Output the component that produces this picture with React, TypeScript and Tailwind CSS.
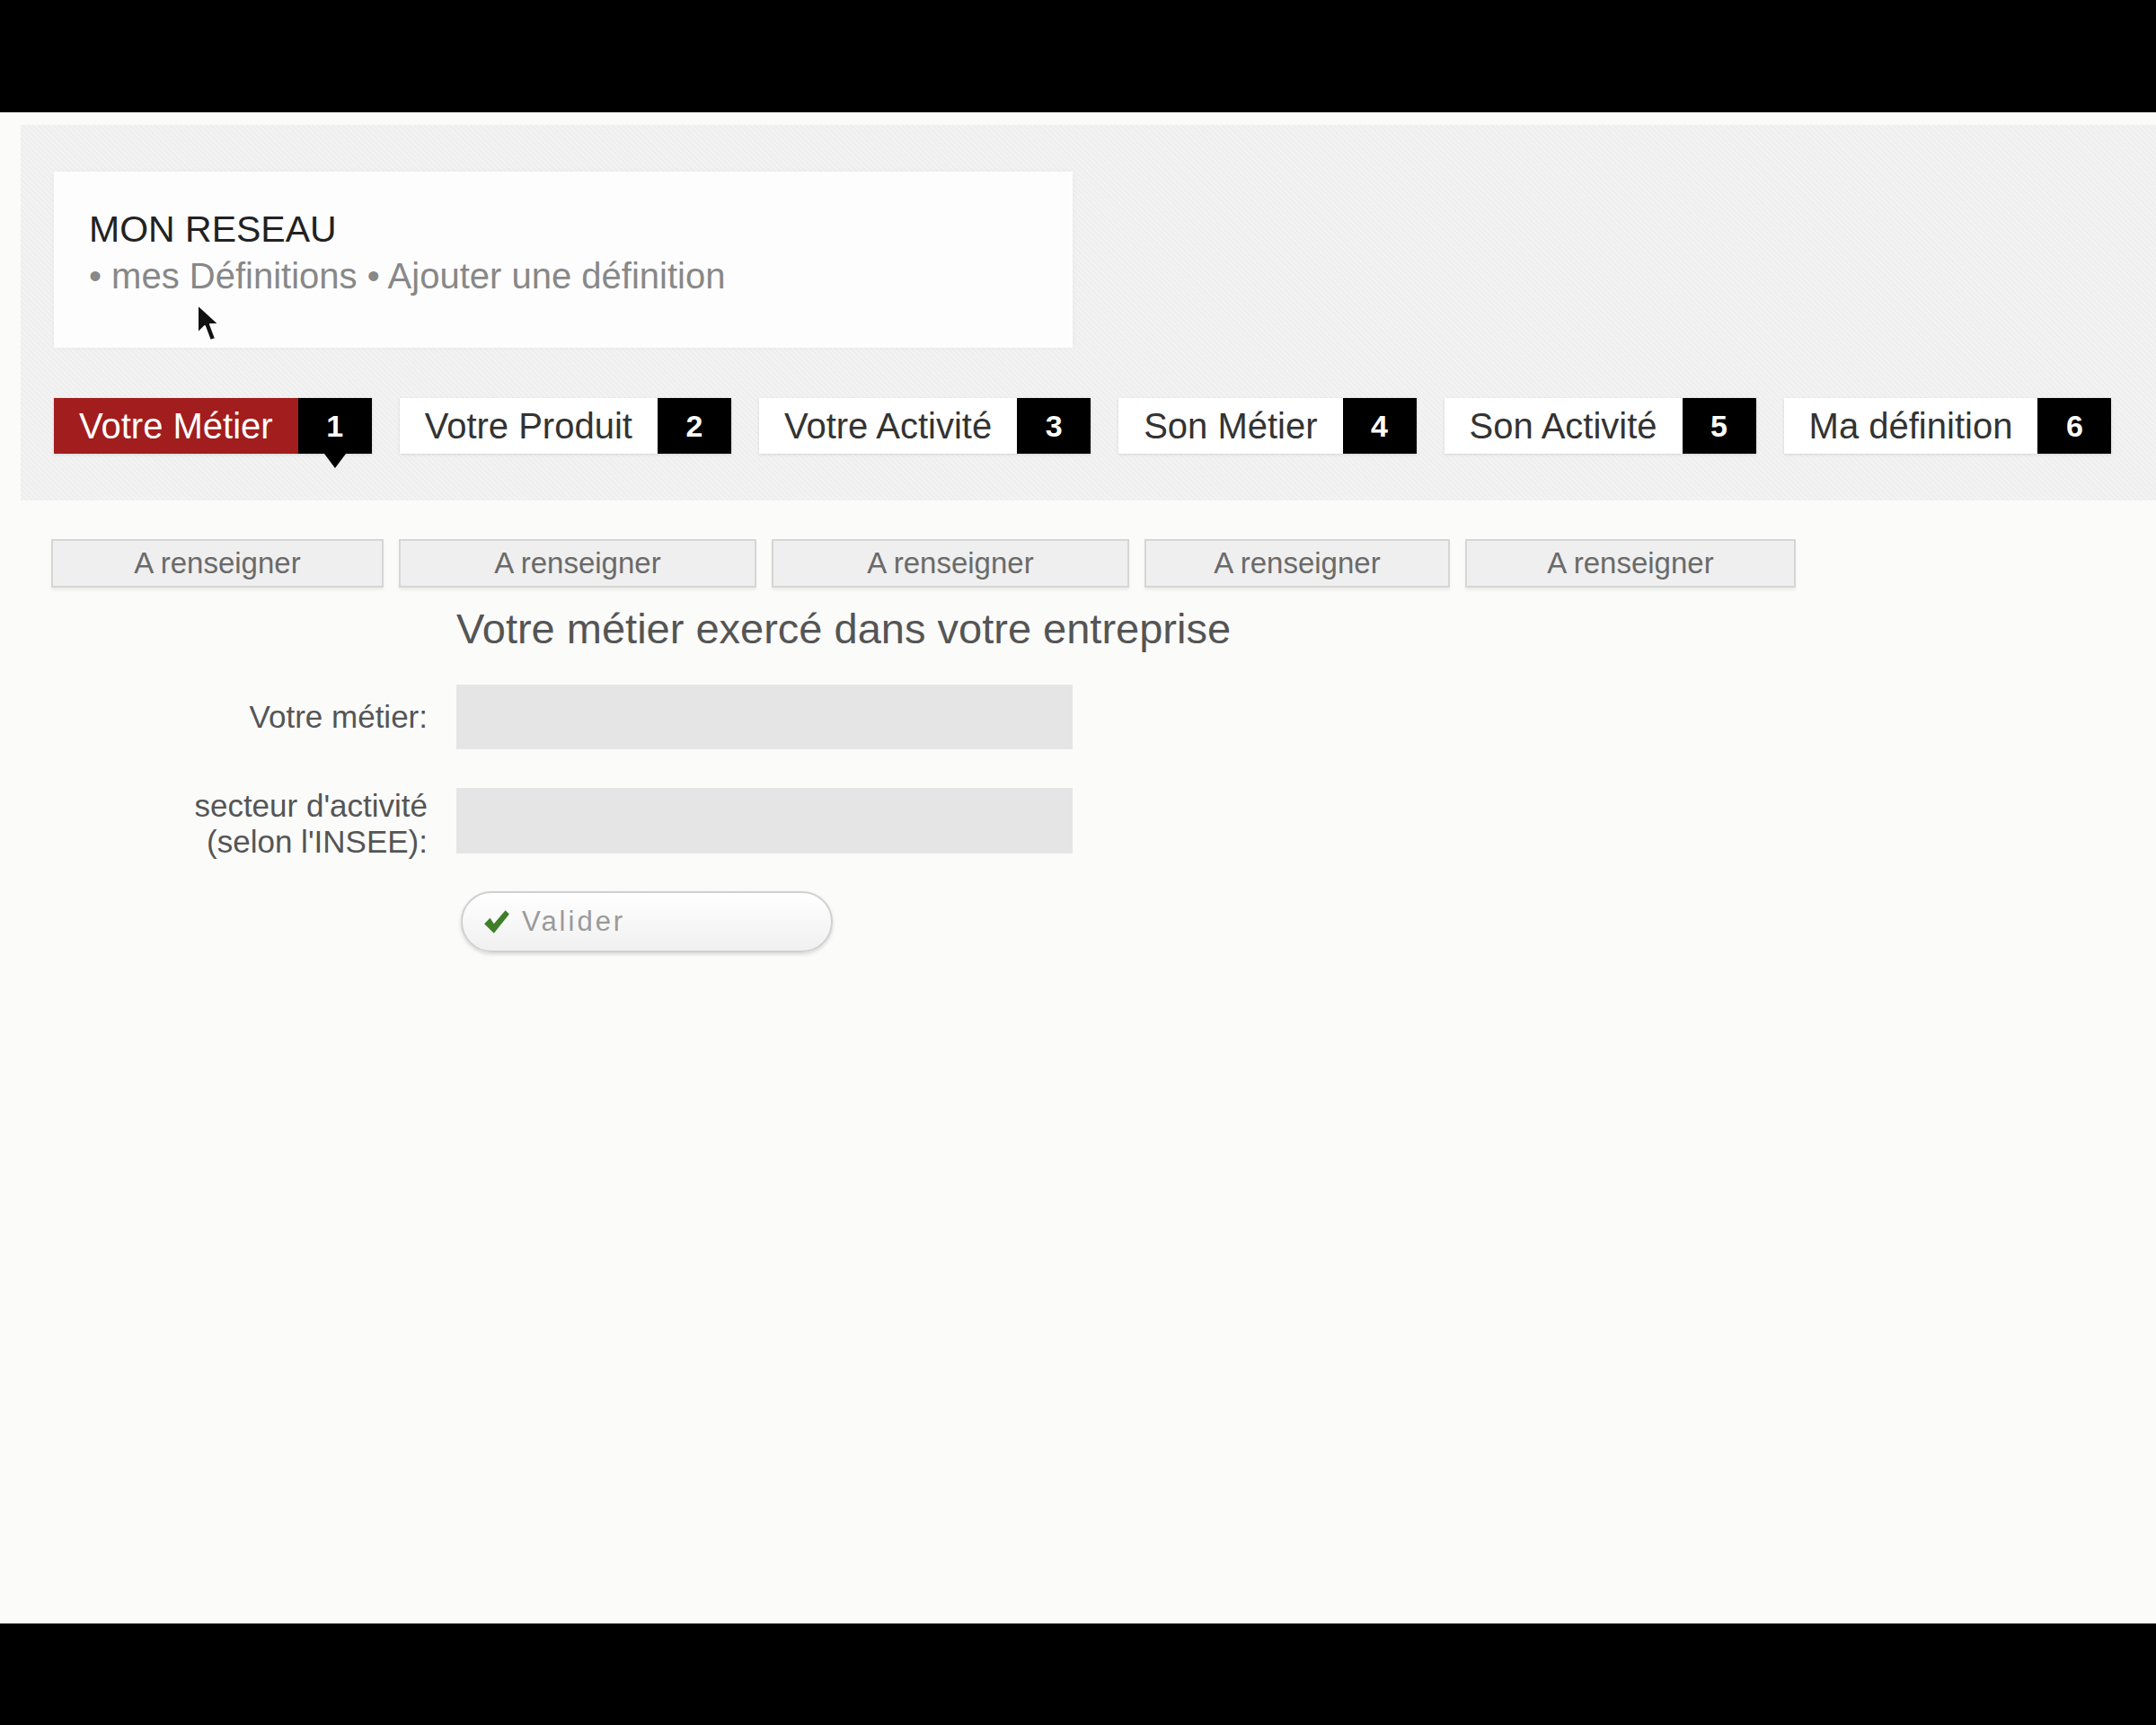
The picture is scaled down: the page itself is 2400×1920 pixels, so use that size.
import { ReactNode } from "react";

const steps = [
  { label: "Votre Métier", n: 1 },
  { label: "Votre Produit", n: 2 },
  { label: "Votre Activité", n: 3 },
  { label: "Son Métier", n: 4 },
  { label: "Son Activité", n: 5 },
  { label: "Ma définition", n: 6 },
];

const statusCells = ["w-[370px]", "w-[398px]", "w-[398px]", "w-[340px]", "w-[368px]"];

function Tab({ label, n, active }: { label: string; n: number; active?: boolean }) {
  return (
    <div className="relative flex h-[62px] shadow-[0_1px_3px_rgba(0,0,0,0.12)]">
      <span
        className={
          active
            ? "flex items-center px-[28px] bg-[#a21d1d] text-white text-[40px]"
            : "flex items-center px-[28px] bg-white text-[#333] text-[40px]"
        }
      >
        {label}
      </span>
      <span className="flex w-[82px] items-center justify-center bg-black text-[34px] font-bold text-white">
        {n}
      </span>
      {active && (
        <span className="absolute -bottom-[16px] right-[29px] h-0 w-0 border-x-[12px] border-t-[16px] border-x-transparent border-t-black" />
      )}
    </div>
  );
}

function FieldRow({ label, children }: { label: ReactNode; children: ReactNode }) {
  return (
    <>
      <div className="flex items-center justify-end text-right text-[35px] leading-[40px] text-[#555]">
        {label}
      </div>
      {children}
    </>
  );
}

function Cursor() {
  return (
    <svg
      className="absolute left-[158px] top-[146px]"
      width="28"
      height="46"
      viewBox="0 0 14 23"
    >
      <path
        d="M1 1 L1 17 L5 13 L8 21 L11 20 L8 12 L13 12 Z"
        fill="#111"
        stroke="#fff"
        strokeWidth="1"
        strokeLinejoin="round"
      />
    </svg>
  );
}

export default function App() {
  return (
    <div className="flex min-h-screen flex-col bg-black font-['Liberation_Sans',Arial,sans-serif]">
      <div className="h-[125px] shrink-0 bg-black" />

      <main className="flex h-[1682px] shrink-0 flex-col bg-[#fbfbfa] pt-[14px]">
        {/* header band with title and step bar */}
        <section className="ml-[23px] h-[418px] bg-[repeating-linear-gradient(45deg,#eeeeee_0px,#eeeeee_2px,#f3f3f3_2px,#f3f3f3_4px)] pl-[37px] pt-[52px]">
          <div className="relative h-[196px] w-[1134px] bg-[#fdfdfd] pl-[39px] pt-[40px] shadow-[0_0_6px_rgba(0,0,0,0.04)]">
            <h1 className="text-[41px] leading-[48px] text-[#222]">MON RESEAU</h1>
            <p className="mt-[4px] text-[40px] leading-[48px] text-[#888]">
              • mes Définitions • Ajouter une définition
            </p>
            <Cursor />
          </div>

          <nav className="mt-[56px] flex gap-[31px]">
            {steps.map((s, i) => (
              <Tab key={s.n} label={s.label} n={s.n} active={i === 0} />
            ))}
          </nav>
        </section>

        {/* status of each step */}
        <div className="ml-[57px] mt-[43px] flex gap-[17px]">
          {statusCells.map((w, i) => (
            <div
              key={i}
              className={`${w} flex h-[54px] items-center justify-center border-2 border-[#d6d6d6] bg-[#efefef] text-[33px] text-[#6a6a6a] shadow-[0_3px_3px_rgba(0,0,0,0.06)]`}
            >
              A renseigner
            </div>
          ))}
        </div>

        {/* step form */}
        <form className="mt-[20px] grid grid-cols-[476px_686px] gap-x-[32px]">
          <div />
          <h2 className="whitespace-nowrap text-[47px] leading-[52px] text-[#555]">
            Votre métier exercé dans votre entreprise
          </h2>

          <div className="col-span-2 h-[36px]" />

          <FieldRow label="Votre métier:">
            <div className="h-[72px] bg-[#e5e5e5]" />
          </FieldRow>

          <div className="col-span-2 h-[43px]" />

          <FieldRow
            label={
              <span>
                secteur d'activité
                <br />
                (selon l'INSEE):
              </span>
            }
          >
            <div className="h-[73px] bg-[#e5e5e5]" />
          </FieldRow>

          <div className="col-span-2 h-[35px]" />

          <div />
          <div>
            <button
              type="button"
              className="ml-[5px] flex h-[68px] w-[414px] items-center gap-[12px] rounded-full border-2 border-[#d0d0d0] bg-[linear-gradient(#ffffff,#f0f0f0)] pl-[22px] text-[31px] tracking-[3px] text-[#9a9a9a] shadow-[0_2px_4px_rgba(0,0,0,0.15)]"
            >
              <svg width="32" height="30" viewBox="0 0 15 14">
                <path d="M1 8 L4 5 L6 8 L12 1 L14 3 L6 13 Z" fill="#3f7f2a" />
              </svg>
              Valider
            </button>
          </div>
        </form>
      </main>

      <div className="h-[113px] shrink-0 bg-black" />
    </div>
  );
}
